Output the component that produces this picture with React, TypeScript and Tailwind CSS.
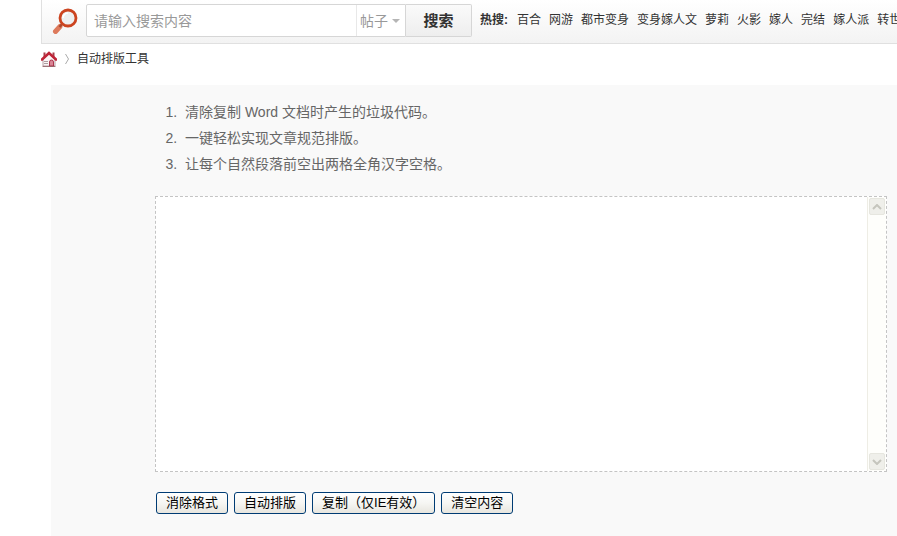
import { useState } from "react";
import type { ReactNode } from "react";

const HOT_WORDS = ["百合", "网游", "都市变身", "变身嫁人文", "萝莉", "火影", "嫁人", "完结", "嫁人派", "转世"];

const TIPS = [
  "清除复制 Word 文档时产生的垃圾代码。",
  "一键轻松实现文章规范排版。",
  "让每个自然段落前空出两格全角汉字空格。",
];

export default function App() {
  const [text, setText] = useState("");

  const stripFormat = () => setText(text.replace(/<[^>]+>/g, ""));
  const autoLayout = () =>
    setText(
      text
        .split("\n")
        .map((line) => line.trim())
        .filter(Boolean)
        .map((line) => `\u3000\u3000${line}`)
        .join("\n")
    );

  return (
    <div className="flex min-h-screen flex-col overflow-hidden bg-white pl-[41px] font-['Liberation_Sans','Noto_Sans_CJK_SC',sans-serif] text-xs text-[#333]">
      <SearchBar />

      <nav className="flex h-[30px] items-center" aria-label="当前位置">
        <a href="#home" aria-label="首页"><HomeIcon /></a>
        <svg className="mx-2 h-3 w-1 shrink-0" viewBox="0 0 4 12" fill="none" stroke="#aaa" aria-hidden="true"><path d="M.5 1 3.5 6 .5 11" /></svg>
        <a href="#tool">自动排版工具</a>
      </nav>

      <main className="mt-[11px] ml-[10px] flex-1 bg-[#f9f9f9] pt-[14px] pr-[10px] pb-5 pl-[104px]">
        <ol className="ml-[26px] list-decimal text-sm leading-[26px] text-[#666]">
          {TIPS.map((tip) => <li key={tip} className="pl-1">{tip}</li>)}
        </ol>

        <div className="mt-[19px] flex h-[276px] border border-dashed border-[#c4c4c4] bg-white">
          <textarea
            aria-label="文章内容"
            value={text}
            onChange={(e) => setText(e.target.value)}
            className="min-w-0 flex-1 resize-none overflow-hidden p-2 text-sm outline-none"
          />
          <div className="flex w-[19px] flex-col justify-between border-l border-[#eeede5] bg-[#fefefb]">
            <ScrollButton label="向上滚动"><path d="M1 5 5 1 9 5" /></ScrollButton>
            <ScrollButton label="向下滚动"><path d="M1 1 5 5 9 1" /></ScrollButton>
          </div>
        </div>

        <div className="mt-5 ml-px flex items-center gap-[6px]">
          <ToolButton onClick={stripFormat}>消除格式</ToolButton>
          <ToolButton onClick={autoLayout}>自动排版</ToolButton>
          <ToolButton onClick={() => navigator.clipboard?.writeText(text)}>复制（仅IE有效）</ToolButton>
          <ToolButton onClick={() => setText("")}>清空内容</ToolButton>
        </div>
      </main>
    </div>
  );
}

function SearchBar() {
  return (
    <header className="flex h-11 items-start overflow-hidden border-b border-l border-[#e0e0e0] bg-linear-to-b from-white to-[#f3f3f3] pt-1 whitespace-nowrap">
      <SearchIcon />
      <form className="flex h-[33px] shrink-0" onSubmit={(e) => e.preventDefault()}>
        <div className="flex w-[320px] rounded-l-xs border border-[#d6d6d6] bg-white">
          <input
            type="text"
            aria-label="搜索内容"
            placeholder="请输入搜索内容"
            className="min-w-0 flex-1 px-[7px] text-sm outline-none placeholder:text-[#999]"
          />
          <label className="flex w-[49px] items-center border-l border-[#e8e8e8] pl-[3px] text-[#999]">
            <select aria-label="搜索类型" className="w-8 appearance-none bg-transparent text-sm outline-none">
              <option>帖子</option>
              <option>用户</option>
            </select>
            <svg className="h-1 w-2 shrink-0" viewBox="0 0 8 4" fill="#b5b5b5" aria-hidden="true"><path d="M0 0h8L4 4z" /></svg>
          </label>
        </div>
        <button type="submit" className="w-[66px] rounded-r-xs border border-l-0 border-[#d6d6d6] bg-linear-to-b from-[#fafafa] to-[#eee] text-[15px] font-bold">搜索</button>
      </form>
      <div className="ml-2 flex h-8 items-center">
        <strong className="mr-[9px]">热搜:</strong>
        <div className="flex gap-2">
          {HOT_WORDS.map((word) => <a key={word} href="#search">{word}</a>)}
        </div>
      </div>
    </header>
  );
}

function ToolButton({ onClick, children }: { onClick: () => void; children: ReactNode }) {
  return <button type="button" onClick={onClick} className="h-[22px] rounded-[3px] border border-[#003c74] bg-linear-to-b from-white via-[#f6f6f3] to-[#e8e6df] px-[9px] text-[13px] leading-5 text-black">{children}</button>;
}

function ScrollButton({ label, children }: { label: string; children: ReactNode }) {
  return (
    <button type="button" aria-label={label} className="m-px flex h-[17px] w-4 items-center justify-center rounded-xs border border-[#e6e6df] bg-[#efefea]">
      <svg className="h-[6px] w-[10px]" viewBox="0 0 10 6" fill="none" stroke="#c5c5bd" strokeWidth="2" aria-hidden="true">{children}</svg>
    </button>
  );
}

function SearchIcon() {
  return (
    <svg className="mt-1 mr-2 ml-[10px] h-[26px] w-[26px] shrink-0" viewBox="0 0 26 26" fill="none" aria-hidden="true">
      <path d="M3.500 23.500 8 18.500" stroke="#dd7a5c" strokeWidth="5" strokeLinecap="round" />
      <path d="M7.500 19 10.500 15.500" stroke="#a8492f" strokeWidth="2.500" />
      <circle cx="16" cy="10" r="8" fill="#eeeff0" stroke="#cc4420" strokeWidth="2.800" />
      <path d="M11 10a5 5 0 0 1 5-5" stroke="#fff" strokeWidth="1.500" />
    </svg>
  );
}

function HomeIcon() {
  return (
    <svg className="h-4 w-4 shrink-0" viewBox="0 0 16 16" aria-hidden="true">
      <path d="M2.500 1.500h2v3l-2 2zM11.500 1.500h2v5l-2-2z" fill="#a8404c" />
      <path d="M2 8.500 8 3l6 5.500v6.500H2z" fill="#fbf4f5" stroke="#a58b90" strokeWidth=".8" />
      <path d="M1 8.500 8 2l7 6.500" fill="none" stroke="#bf2538" strokeWidth="2.600" strokeLinecap="round" />
      <path d="M8.500 15v-4a2 2 0 0 1 4 0v4z" fill="#d98595" stroke="#a52640" strokeWidth=".9" />
      <path d="M3.500 10h1v1h-1zm2 0h1v1h-1zm-2 2h1v1h-1zm2 0h1v1h-1z" fill="#5d4a4c" />
      <path d="M1.500 15.500h13" stroke="#8d5a60" strokeWidth=".8" />
    </svg>
  );
}
